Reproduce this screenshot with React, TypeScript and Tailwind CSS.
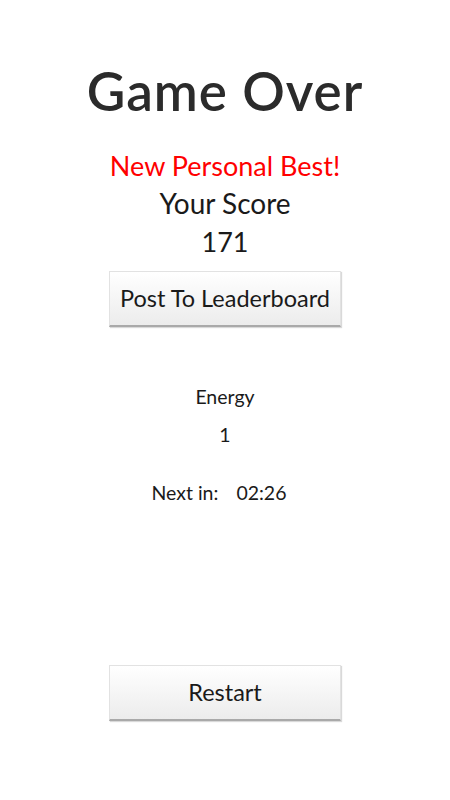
import React from "react";

export default function App() {
  const btn =
    "w-[232px] h-[56px] flex items-center justify-center bg-gradient-to-b from-[#ffffff] to-[#ececec] border border-[#e2e2e2] border-b-2 border-b-[#a9a9a9] shadow-[1px_1px_1px_rgba(0,0,0,0.15)] text-[#1a1a1a]";
  return (
    <div className="w-[450px] h-[800px] bg-white flex flex-col items-center font-['Lato',sans-serif] overflow-hidden">
      <h1 className="mt-[58px] h-[64px] flex items-center text-[53px] leading-none font-semibold text-[#2b2b2b] tracking-[1px] font-['Lato',sans-serif]">
        Game Over
      </h1>
      <div className="mt-[27px] h-[34px] flex items-center text-[27px] text-[#ff0000]">
        New Personal Best!
      </div>
      <div className="mt-[3px] h-[34px] flex items-center text-[28px] text-[#1a1a1a]">
        Your Score
      </div>
      <div className="mt-[5px] h-[34px] flex items-center text-[27px] text-[#1a1a1a]">
        171
      </div>
      <button className={"mt-[12px] text-[23.5px] " + btn}>Post To Leaderboard</button>
      <div className="mt-[57px] h-[26px] flex items-center text-[19.5px] text-[#1a1a1a]">
        Energy
      </div>
      <div className="mt-[12px] h-[26px] flex items-center text-[19.5px] text-[#1a1a1a]">
        1
      </div>
      <div className="mt-[32px] h-[26px] flex items-center gap-[18px] pr-[12px] text-[19.5px] text-[#1a1a1a]">
        <span>Next in:</span>
        <span>02:26</span>
      </div>
      <button className={"mt-[159px] text-[23.5px] " + btn}>Restart</button>
    </div>
  );
}
